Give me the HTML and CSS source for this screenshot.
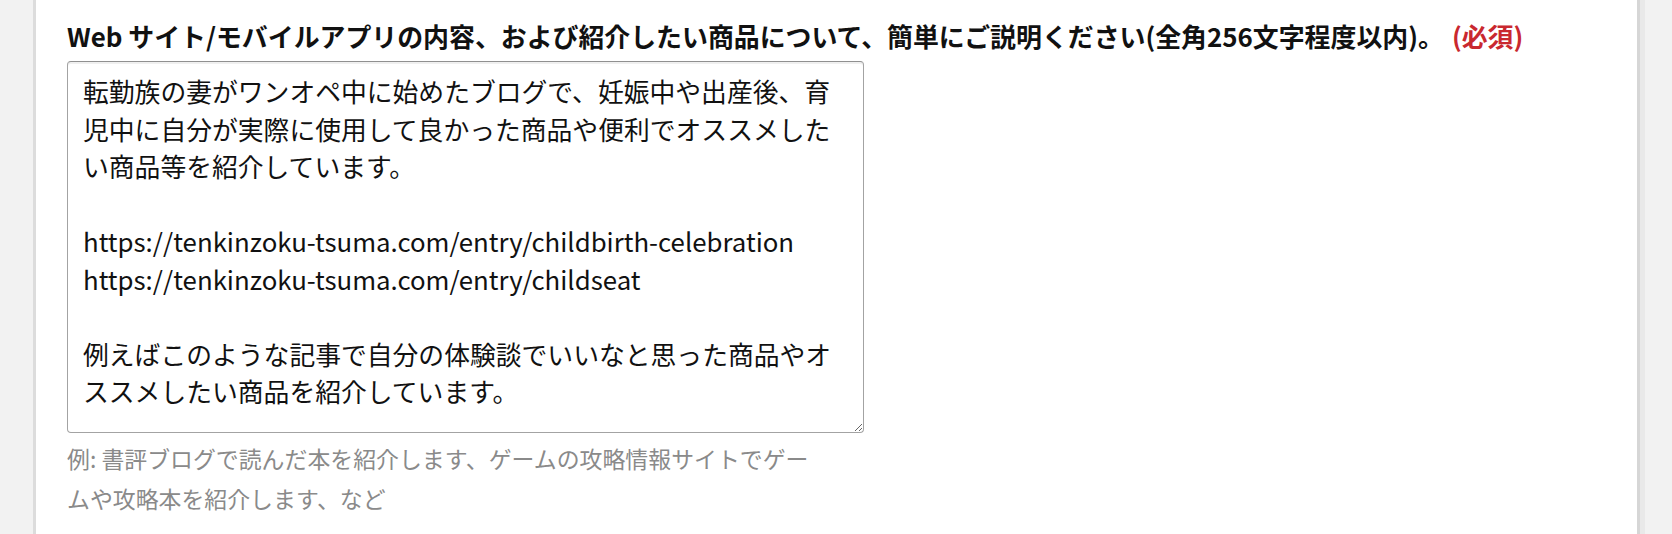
FILE: index.html
```html
<!DOCTYPE html>
<html lang="ja">
<head>
<meta charset="utf-8">
<title>Web サイト/モバイルアプリの内容</title>
<link rel="stylesheet" href="styles.css">
</head>
<body>
<div class="page">
  <div class="card">
    <label class="field-label" for="desc">Web サイト/モバイルアプリの内容、および紹介したい商品について、簡単にご説明ください(全角256文字程度以内)。<span class="required">(必須)</span></label>
    <textarea id="desc" class="field-input">転勤族の妻がワンオペ中に始めたブログで、妊娠中や出産後、育児中に自分が実際に使用して良かった商品や便利でオススメしたい商品等を紹介しています。

https://tenkinzoku-tsuma.com/entry/childbirth-celebration
https://tenkinzoku-tsuma.com/entry/childseat

例えばこのような記事で自分の体験談でいいなと思った商品やオススメしたい商品を紹介しています。</textarea>
    <p class="field-hint">例: 書評ブログで読んだ本を紹介します、ゲームの攻略情報サイトでゲームや攻略本を紹介します、など</p>
  </div>
</div>
</body>
</html>
```

FILE: styles.css
```css
html, body {
  margin: 0;
  padding: 0;
}

body {
  background: #f2f2f2;
  font-family: "Noto Sans CJK JP", "Noto Sans", sans-serif;
  color: #111111;
  width: 1672px;
  height: 534px;
  overflow: hidden;
}

.page {
  padding: 0 32px 0 33px;
  height: 534px;
  box-sizing: border-box;
}

.card {
  background: #ffffff;
  height: 534px;
  box-sizing: border-box;
  border-left: 3px solid #dcdcdc;
  border-right: 3px solid #d6d6d6;
  box-shadow: 5px 0 0 #e9e9e9;
  padding: 20px 0 0 31px;
}

.field-label {
  display: block;
  font-size: 25.9px;
  line-height: 32px;
  font-weight: 700;
  color: #111111;
  white-space: nowrap;
  margin: 0 0 9px 0;
}

.required {
  color: #c9282f;
  margin-left: 8px;
}

.field-input {
  display: block;
  box-sizing: border-box;
  width: 797px;
  height: 372px;
  margin: 0;
  padding: 10px 15px 4px 15px;
  font-family: "Noto Sans CJK JP", "Noto Sans", sans-serif;
  font-size: 25.8px;
  line-height: 37.5px;
  color: #111111;
  background: #ffffff;
  border: 1px solid #a3a3a3;
  border-top-color: #909090;
  border-radius: 4px;
  box-shadow: inset 0 2px 0 rgba(0, 0, 0, 0.06);
  resize: both;
  overflow: hidden;
  outline: none;
}

.field-hint {
  width: 760px;
  margin: 6px 0 0 0;
  font-size: 22.9px;
  line-height: 39.5px;
  color: #8a8a8a;
}
```
